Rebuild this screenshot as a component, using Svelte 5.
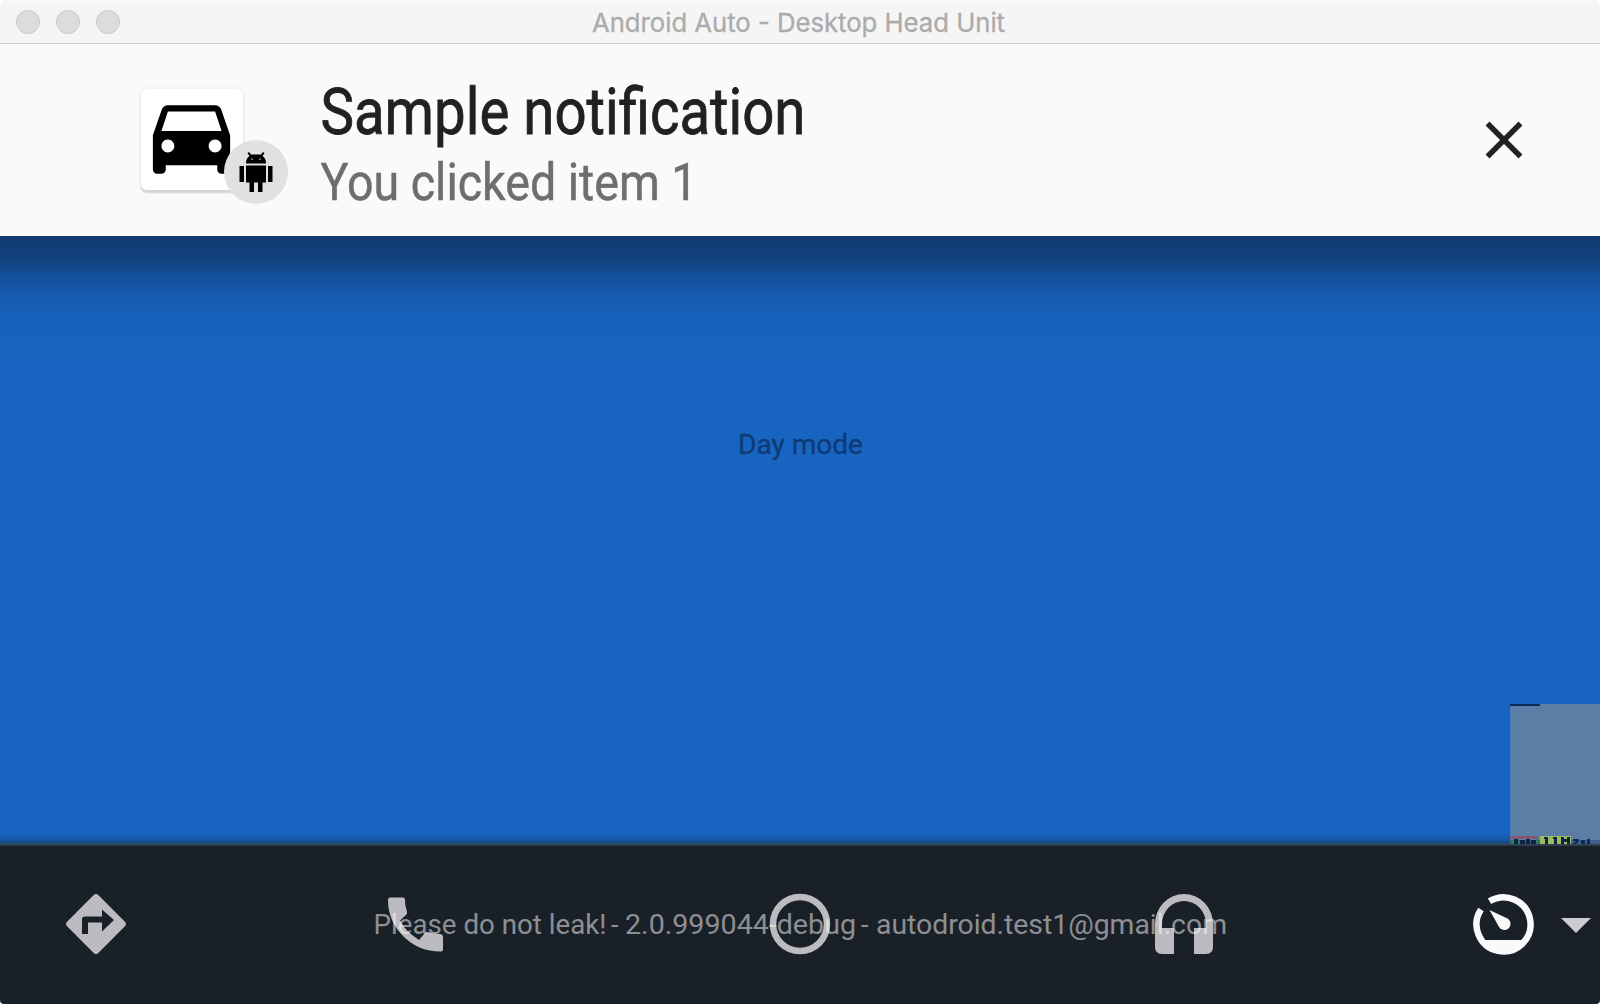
<script lang="ts">
  const lights = [0, 1, 2];
</script>

<div class="window">
  <header class="titlebar">
    <div class="lights">
      {#each lights as light (light)}<span class="light"></span>{/each}
    </div>
    <svg class="caption" width="440" height="42" viewBox="0 0 440 42">
      <text x="12" y="31" textLength="413" lengthAdjust="spacingAndGlyphs">Android Auto - Desktop Head Unit</text>
    </svg>
  </header>

  <section class="notification">
    <div class="app-icon">
      <svg class="car" width="103" height="103" viewBox="0 0 24 24">
        <path d="M18.92 5.01C18.72 4.42 18.16 4 17.5 4h-11c-.66 0-1.21.42-1.42 1.01L3 11v8c0 .55.45 1 1 1h1c.55 0 1-.45 1-1v-1h12v1c0 .55.45 1 1 1h1c.55 0 1-.45 1-1v-8l-2.08-5.99zM6.5 15c-.83 0-1.5-.67-1.5-1.5S5.67 12 6.5 12s1.5.67 1.5 1.5S7.33 15 6.5 15zm11 0c-.83 0-1.5-.67-1.5-1.5s.67-1.5 1.5-1.5 1.5.67 1.5 1.5-.67 1.5-1.5 1.5zM5 10l1.5-4.5h11L19 10H5z" />
      </svg>
      <div class="badge">
        <svg width="64" height="64" viewBox="0 0 64 64">
          <path d="M23.500 13l1.500-1 2 2.500h10l2-2.500 1.500 1-2 3q3.500 2 3.500 7.500H22q0-5.500 3.500-7.500z" />
          <path d="M22 25.500h20v17h-3.500V52h-4.500v-9.500h-4V52h-4.500v-9.500H22zM15.500 26H20v16h-4.500zM44 26h4.500v16H44z" />
          <path class="eye" d="M27 18.500h2v1.500h-2zM35 18.500h2v1.500h-2z" />
        </svg>
      </div>
    </div>
    <svg class="message" width="620" height="150" viewBox="0 0 620 150">
      <text class="title" x="-0.500" y="70" textLength="485" lengthAdjust="spacingAndGlyphs">Sample notification</text>
      <text class="detail" x="-0.500" y="135.500" textLength="377" lengthAdjust="spacingAndGlyphs">You clicked item 1</text>
    </svg>
    <svg class="close" width="40" height="40" viewBox="0 0 40 40">
      <path d="M3.500 3.500l33 33M36.500 3.500l-33 33" />
    </svg>
  </section>

  <main class="screen">
    <svg class="mode" width="160" height="40" viewBox="0 0 160 40">
      <text x="18" y="28" textLength="125" lengthAdjust="spacingAndGlyphs">Day mode</text>
    </svg>
    <svg class="graph" width="90" height="140" viewBox="0 0 90 140">
      <path fill="#5c7da5" d="M0 0h90v140H0z" />
      <path fill="#4b80c6" d="M0 2h2v130H0z" />
      <path fill="#0b2d5c" d="M0 0h30v2H0z" />
      <path fill="#855572" d="M0 132h28v3H0z" />
      <path fill="#3e5f8c" d="M0 136h90v4H0z" />
      <path fill="#9cbc62" d="M30 132h31v8H30z" />
      <path fill="#0d2444" d="M4 135h4v5H4zM10 136h5v4h-5zM16 135h4v5h-4zM21 136h5v4h-5z" />
      <path fill="#17913f" d="M2 136h2v4H2zM8 138h2v2H8zM26 135h2v4h-2z" />
      <path fill="#12233c" d="M34 133h4v7h-3v-5h-1zM43 133h4v7h-3v-5h-1zM51 133h3v7h-3zM54 135h3v3h-3zM57 133h3v7h-3z" />
      <path fill="#0d2b58" d="M63 135h6v2l-3 3h-3l3-3h-3zM71 136h4v4h-4zM77 135h3v5h-3z" />
    </svg>
  </main>

  <nav class="dock">
    <svg class="icon turn" width="64" height="64" viewBox="-32 -32 64 64">
      <path d="M-2-29.200Q0-31 2-29.200L29.200-2Q31 0 29.200 2L2 29.200Q0 31-2 29.200L-29.200 2Q-31 0-29.200-2z" />
      <path class="cut" d="M-14 10V-5Q-14-7.500-11-7.500H6V-14.500L18-4 6 7.500V-1.500H-8V10z" />
    </svg>
    <svg class="icon phone" width="64" height="64" viewBox="0 0 64 64">
      <path d="M6 5.500h13q2 0 2 3 0 6 2 11 .5 2-1 3.500l-6 5.500Q21 39 35 48l6-7q1.500-1.500 3.500-.800 5 1.800 11 1.800 3.500 0 3.500 3v12.500q0 2-3 2Q35 59.500 20 45 4 29 4 8.500q0-3 2-3z" />
    </svg>
    <svg class="icon home" width="64" height="64" viewBox="0 0 64 64">
      <circle cx="32" cy="32" r="27" />
    </svg>
    <svg class="icon audio" width="64" height="64" viewBox="0 0 64 64">
      <path d="M3 32a29 30 0 0 1 58 0v23q0 7-7 7H42V36h12v-4a22 23 0 0 0-44 0v4h12v26H10q-7 0-7-7z" />
    </svg>
    <svg class="icon gauge" width="64" height="64" viewBox="0 0 64 64">
      <path class="ring" d="M17.500 9.300A27 27 0 1 1 9 17.500" />
      <path d="M13 48h38q-7 12.500-19 12.500T13 48z" />
      <path d="M17.500 18l17 8a6.200 6.200 0 1 1-8 8z" />
    </svg>
    <svg class="caret" width="30" height="16" viewBox="0 0 30 16"><path d="M0 0h30L15 15z" /></svg>
    <svg class="watermark" width="880" height="60" viewBox="0 0 880 60">
      <text y="40"><tspan x="11.500" textLength="233" lengthAdjust="spacingAndGlyphs">Please do not leak!</tspan>
        <tspan x="249">-</tspan>
        <tspan x="263" textLength="231" lengthAdjust="spacingAndGlyphs">2.0.999044-debug</tspan>
        <tspan x="499">-</tspan>
        <tspan x="514" textLength="351" lengthAdjust="spacingAndGlyphs">autodroid.test1@gmail.com</tspan></text>
    </svg>
  </nav>
</div>

<style>
  :global(body) { margin: 0; background: #fff; overflow: hidden; }
  svg { display: block; flex: none; }
  .window {
    width: 1600px; height: 1004px; display: flex; flex-direction: column;
    overflow: hidden; border-radius: 8px 8px 4px 4px;
    font-family: Roboto, "Liberation Sans", sans-serif;
  }
  .titlebar {
    height: 44px; box-sizing: border-box; flex: none; display: flex;
    background: #f5f5f5; border-top: 1px solid #fbfbfb; border-bottom: 1px solid #cbcbcb;
  }
  .lights { display: flex; gap: 16px; padding: 9px 0 0 16px; width: 564px; }
  .light {
    width: 24px; height: 24px; box-sizing: border-box; border-radius: 50%;
    background: #dcdcdc; border: 1px solid #c9c9c9;
  }
  .caption { font: 26px Inter, sans-serif; fill: #ababab; stroke: #ababab; stroke-width: 0.3; }
  .notification { height: 192px; flex: none; display: flex; background: #fafafa; }
  .app-icon {
    position: relative; width: 102px; height: 101px; flex: none;
    margin: 45px 0 0 141px; background: #fff; border-radius: 6px;
    box-shadow: 0 3px 2px #d4d4d4, 0 0 4px #eaeaea;
  }
  .car { margin: -1px 0 0 -1px; }
  .badge {
    position: absolute; left: 83px; top: 51px; width: 64px; height: 64px;
    border-radius: 50%; background: #e2e0e3;
  }
  .eye { fill: #777; }
  .message { margin: 20px 0 0 78px; }
  .title { font-size: 64px; fill: #212121; stroke: #212121; stroke-width: 0.8; }
  .detail { font-size: 52px; fill: #6e6e6e; stroke: #6e6e6e; stroke-width: 0.5; }
  .close { margin: 76px 0 0 543px; fill: none; stroke: #212121; stroke-width: 5.4; }
  .screen {
    height: 610px; flex: none; display: flex; flex-direction: column;
    background:
      linear-gradient(#103a70 0, #10427c 22px, #134f96 38px, #155aae 58px, #1761bb 82px, #1865c100 130px),
      linear-gradient(#1865c1 0, #1865c1 596px, #1557a5 604px, #1a4a80 607px, #34495c 608px, #2a3844 610px);
  }
  .mode { margin: 190px auto 0; font-size: 27px; fill: #0f3a76; stroke: #0f3a76; stroke-width: 0.3; }
  .graph { margin: 238px 0 0 1510px; }
  .dock { position: relative; height: 158px; flex: none; display: flex; background: #1a2027; }
  .icon { margin-top: 46px; fill: #bcbcc0; }
  .turn { margin-left: 64px; }
  .cut { fill: #1a2027; }
  .phone { margin-left: 256px; }
  .home { margin-left: 320px; fill: none; stroke: #bcbcc0; stroke-width: 6.500; }
  .audio { margin-left: 320px; }
  .gauge { margin-left: 256px; fill: #fafafc; }
  .ring { fill: none; stroke: #fafafc; stroke-width: 6.500; }
  .caret { margin: 72px 0 0 25px; fill: #ccccd0; }
  .watermark {
    position: absolute; left: 362px; top: 48px;
    font-size: 27.500px; fill: #fff; fill-opacity: 0.5;
  }
</style>
